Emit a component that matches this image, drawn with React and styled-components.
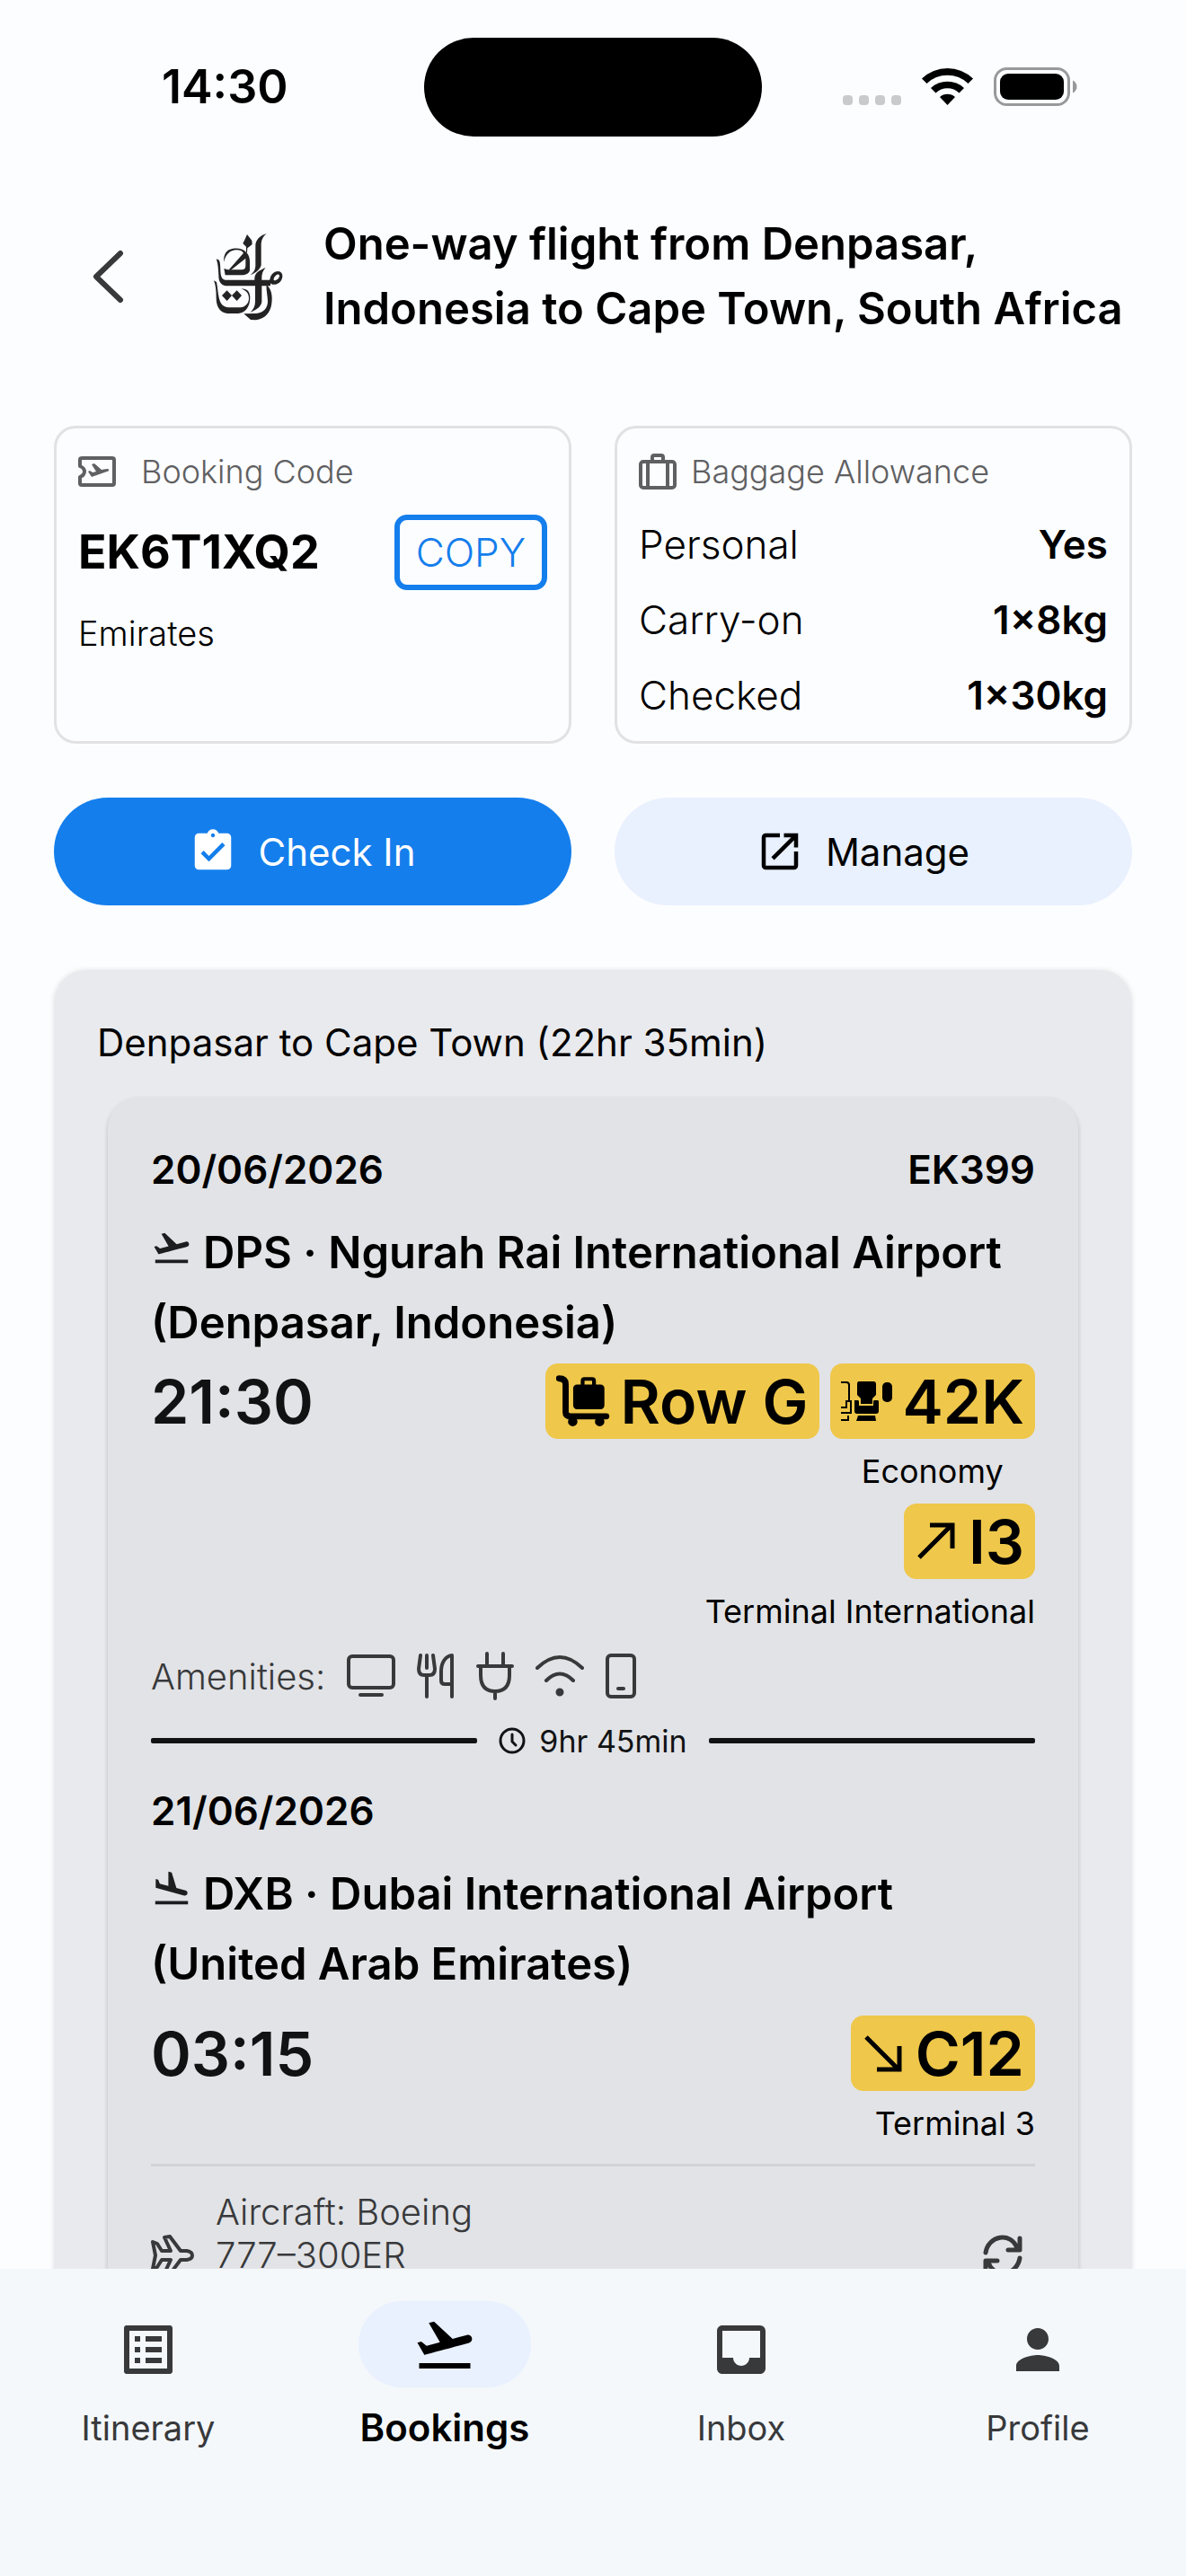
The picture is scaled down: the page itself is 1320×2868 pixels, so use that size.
import React from 'react';
import styled, { createGlobalStyle, css } from 'styled-components';
import {
  MdFlightTakeoff,
  MdFlightLand,
  MdAssignmentTurnedIn,
  MdOutlineOpenInNew,
  MdOutlineListAlt,
  MdInbox,
  MdPerson,
} from 'react-icons/md';

const Global = createGlobalStyle`
  * { box-sizing: border-box; }
  body {
    margin: 0;
    background: #fcfdff;
    color: #000;
    font-family: Inter, "Liberation Sans", sans-serif;
  }
  button { font: inherit; color: inherit; cursor: pointer; }
  h1, h2, h3, p, dl, dd, dt, ul { margin: 0; padding: 0; }
  svg { display: block; flex: none; }
`;

const Screen = styled.div`
  height: 100vh;
  display: flex;
  flex-direction: column;
`;

/* Status bar */
const StatusBar = styled.div`
  display: grid;
  grid-template-columns: 1fr auto 1fr;
  align-items: center;
  padding: 42px 120px 0;
`;
const Clock = styled.time`
  padding-left: 60px;
  font-size: 52px;
  line-height: 64px;
  font-weight: 600;
`;
const Island = styled.div`
  width: 376px;
  height: 110px;
  border-radius: 55px;
  background: #000;
`;
const StatusIcons = styled.div`
  display: flex;
  justify-content: flex-end;
  align-items: center;
`;

/* Header */
const Header = styled.header`
  display: flex;
  align-items: center;
  padding: 84px 60px 94px 84px;
`;
const BackButton = styled.button`
  display: grid;
  place-items: center;
  width: 72px;
  height: 72px;
  padding: 0;
  border: 0;
  background: none;
`;
const LogoBox = styled.div`
  width: 120px;
  margin: 0 24px 0 60px;
  display: flex;
  justify-content: center;
`;
const Title = styled.h1`
  flex: 1;
  font-size: 49px;
  line-height: 72px;
  font-weight: 600;
`;

const Main = styled.main`
  flex: 1;
  min-height: 0;
  overflow-y: auto;
  scrollbar-width: none;
`;
const Columns = styled.div`
  display: grid;
  grid-template-columns: 1fr 1fr;
  gap: 48px;
  padding: 0 60px;
  margin-bottom: 60px;
`;

/* Info cards */
const InfoCard = styled.section`
  min-height: 354px;
  padding: 21px 24px 9px;
  border: 3px solid #e2e2e5;
  border-radius: 24px;
`;
const CardLabel = styled.h2`
  display: flex;
  align-items: center;
  gap: ${(p) => p.$gap};
  height: 54px;
  font-size: 36px;
  font-weight: 300;
  color: #5f6062;
`;
const CodeRow = styled.div`
  display: flex;
  align-items: center;
  justify-content: space-between;
  margin-top: 21px;
`;
const Code = styled.strong`
  font-size: 52px;
  line-height: 72px;
  font-weight: 700;
`;
const CopyButton = styled.button`
  height: 84px;
  padding: 0 18px;
  border: 6px solid #147eec;
  border-radius: 14px;
  background: none;
  && {
    font-size: 44px;
    font-weight: 300;
    color: #147eec;
  }
`;
const Airline = styled.p`
  margin-top: 21px;
  font-size: 38px;
  line-height: 54px;
  font-weight: 300;
`;
const Allowance = styled.dl`
  display: grid;
  margin-top: 12px;
`;
const AllowanceRow = styled.div`
  display: flex;
  justify-content: space-between;
  font-size: 44px;
  line-height: 84px;
  font-weight: 300;
`;
const Amount = styled.dd`
  font-weight: 600;
`;

const ActionButton = styled.button`
  display: flex;
  align-items: center;
  justify-content: center;
  gap: 24px;
  height: 120px;
  padding: 0 24px 0 0;
  border: 0;
  border-radius: 60px;
  background: #e9f0fe;
  && { font-size: 42px; }
  ${(p) => p.$primary && css`&& { background: #147eec; color: #fff; }`}
`;

/* Journey */
const Journey = styled.section`
  margin: 72px 60px 0;
  padding: 48px 60px 60px;
  border-radius: 36px;
  background: #e9eaed;
  box-shadow: 0 0 4px 2px rgba(0, 0, 0, 0.06);
`;
const JourneyTitle = styled.h2`
  margin-left: -12px;
  font-size: 42px;
  line-height: 66px;
  font-weight: 400;
`;
const Leg = styled.article`
  margin-top: 27px;
  padding: 48px;
  border-radius: 36px;
  background: #e2e3e6;
  box-shadow: 0 3px 4px 1px rgba(0, 0, 0, 0.14);
`;
const Row = styled.div`
  display: flex;
  justify-content: space-between;
  align-items: ${(p) => p.$align || 'center'};
  margin-top: ${(p) => p.$top || '0'};
`;
const DateText = styled.span`
  font-size: 44px;
  line-height: 66px;
  font-weight: 600;
`;
const Airport = styled.h3`
  margin-top: 21px;
  font-size: 49px;
  line-height: 78px;
  font-weight: 600;
  svg {
    display: inline-block;
    margin-right: 12px;
    color: #1d1e20;
  }
`;
const Place = styled.span`
  display: block;
`;
const Time = styled.time`
  font-size: 68px;
  line-height: 84px;
  font-weight: 600;
  color: #111214;
`;
const Places = styled.div`
  display: flex;
  flex-direction: column;
  align-items: flex-end;
`;
const Badges = styled.div`
  display: flex;
  gap: 12px;
`;
const BadgeColumn = styled.div`
  display: flex;
  flex-direction: column;
  align-items: center;
`;
const Badge = styled.span`
  display: flex;
  align-items: center;
  gap: 12px;
  height: 84px;
  padding: 0 12px;
  border-radius: 14px;
  background: #efc74a;
  font-size: 68px;
  font-weight: 600;
  white-space: nowrap;
`;
const Caption = styled.span`
  font-size: 36px;
  line-height: 72px;
`;
const Amenities = styled.div`
  display: flex;
  align-items: center;
  height: 72px;
  color: #38393b;
  font-size: 40px;
  font-weight: 300;
`;
const AmenityList = styled.ul`
  display: flex;
  align-items: center;
  gap: 24px;
  margin-left: 24px;
  list-style: none;
`;
const Duration = styled.div`
  display: flex;
  align-items: center;
  gap: 24px;
  height: 72px;
  font-size: 34px;
  color: #111214;
  &::before, &::after {
    content: '';
    flex: 1;
    height: 6px;
    border-radius: 2px;
    background: #111214;
  }
`;
const DurationText = styled.span`
  display: flex;
  align-items: center;
  gap: 15px;
`;
const Aircraft = styled.footer`
  display: flex;
  align-items: center;
  margin-top: 9px;
  padding-top: 27px;
  border-top: 3px solid #d2d3d5;
  color: #38393b;
`;
const AircraftText = styled.p`
  width: 330px;
  margin: 0 auto 0 24px;
  padding-bottom: 48px;
  font-size: 40px;
  line-height: 48px;
  font-weight: 300;
`;
const IconButton = styled.button`
  display: grid;
  place-items: center;
  width: 72px;
  height: 72px;
  padding: 0;
  border: 0;
  background: none;
`;

/* Bottom navigation */
const Nav = styled.nav`
  display: grid;
  grid-template-columns: repeat(4, 1fr);
  padding: 36px 0 132px;
  background: #f4f8fb;
`;
const NavItem = styled.a`
  display: flex;
  flex-direction: column;
  align-items: center;
  gap: 12px;
  font-size: ${(p) => (p.$active ? '42px' : '38px')};
  line-height: 66px;
  font-weight: ${(p) => (p.$active ? 600 : 400)};
  color: ${(p) => (p.$active ? '#000' : '#38393b')};
  text-decoration: none;
`;
const NavPill = styled.span`
  display: grid;
  place-items: center;
  width: 192px;
  height: 96px;
  padding-top: ${(p) => (p.$active ? '0' : '12px')};
  border-radius: 48px;
  background: ${(p) => (p.$active ? '#e9f0fe' : 'transparent')};
`;

const Stroke = ({ w, h, vb, sw = 4, children }) => (
  <svg width={w} height={h} viewBox={vb || `0 0 ${w} ${h}`} fill="none" stroke="currentColor" strokeWidth={sw} strokeLinecap="round" strokeLinejoin="round" aria-hidden="true">
    {children}
  </svg>
);

const SignalStatus = () => (
  <svg width="262" height="44" viewBox="0 0 262 44" aria-hidden="true">
    <g fill="#c9cacc">
      <rect x="0" y="31" width="11" height="11" rx="4" />
      <rect x="18" y="31" width="11" height="11" rx="4" />
      <rect x="36" y="31" width="11" height="11" rx="4" />
      <rect x="54" y="31" width="11" height="11" rx="4" />
    </g>
    <path d="M88 12.500A41 41 0 0 1 145 12.500L139.500 18A33 33 0 0 0 93.500 18Z" />
    <path d="M98 23A27 27 0 0 1 135 23L129.500 28.500A19 19 0 0 0 103.500 28.500Z" />
    <path d="M108 33A13 13 0 0 1 125 33L116.500 42Z" />
    <rect x="169.500" y="1.500" width="82" height="40" rx="13" fill="none" stroke="#98999b" strokeWidth="3" />
    <rect x="175" y="7" width="71" height="29" rx="9" />
    <path d="M256 14.500C262 17 262 26 256 28.500Z" fill="#98999b" />
  </svg>
);

const EmiratesLogo = () => (
  <svg width="78" height="98" viewBox="52 50 234 294" fill="#232323" role="img" aria-label="Emirates">
    <path d="M166 56l16 20 1 13-8 7-8 6-1 14-3 1v-20l-11-11 6-12z" />
    <path d="M231 53c-14 12-18 24-18 40v66c-4 14-16 25-36 33 12-10 17-18 17-33V94c0-20 16-35 37-41z" />
    <path d="M89 148c-3-26 10-42 30-45 32-5 56 12 56 43v30c-2 10-14 16-28 16H93l-4-22c10 4 20 5 34 4h25c9 0 13-5 13-14v-24l-50 40-5-3 48-55c-4-8-14-11-27-10-22 3-35 19-38 40z" />
    <path d="M64 138l9 4c3 8 4 21 4 35 1 20 5 30 16 31h98v-6c2-20 17-26 37-35-9 10-13 20-13 33v8h29v20h-29v54c-2 14-16 26-38 34 11-12 16-21 16-36v-52H104c-25 0-33-13-33-35-1-20-2-37-7-53z" />
    <path d="M243 202c3-13 14-23 27-23 13 1 17 14 12 26-6 14-19 20-31 18-10-2-12-10-8-21zm14 8c9 0 16-7 17-15 0-7-7-7-12-2-6 5-10 15-5 17z" fillRule="evenodd" />
    <path d="M55 210l9 5c3 14 4 31 7 47 5 25 13 36 34 38h38c20-3 29-15 29-32-1-18-11-26-25-30 18-2 29 9 29 30-1 31-16 49-40 52h-36c-28-4-37-25-37-53 0-24-2-43-8-57z" />
    <path d="M99 243l16 17-16 18-17-18zM132 243l16 17-16 18-17-18z" />
    <path d="M231 224c15 13 21 35 17 63-4 31-23 51-52 55l-18-1-23-20 41-1c24-2 38-17 39-39 0-22-6-38-4-57z" />
  </svg>
);

const TicketIcon = () => (
  <Stroke w={42} h={34} sw={4}>
    <path d="M4 2h34a2 2 0 0 1 2 2v26a2 2 0 0 1-2 2H4a2 2 0 0 1-2-2v-7q5-2 5-6t-5-6V4a2 2 0 0 1 2-2z" />
    <path d="M11 17l2-1 3 2 4-1-5-8 3-1 8 7 6-1q3 0 2 2-1 1-2 1L15 23z" fill="currentColor" stroke="none" />
  </Stroke>
);
const LuggageIcon = () => (
  <Stroke w={42} h={40} sw={4}>
    <rect x="2" y="9" width="38" height="29" rx="3" />
    <path d="M10 9v29M32 9v29M15 9V4q0-2 2-2h8q2 0 2 2v5" />
  </Stroke>
);
const CartIcon = () => (
  <svg width="60" height="58" viewBox="0 0 57 55" aria-hidden="true">
    <path d="M3 3.500q7 0 7 6V39q0 4.500 5 4.500h38" fill="none" stroke="#000" strokeWidth="6.500" strokeLinecap="round" />
    <rect x="18" y="10" width="33" height="26" rx="4" />
    <path d="M28 12V6q0-2 2-2h8q2 0 2 2v6" fill="none" stroke="#000" strokeWidth="4" />
    <circle cx="17.500" cy="49" r="5" /><circle cx="46" cy="49" r="5" />
  </svg>
);
const SeatIcon = () => (
  <svg width="57" height="46" viewBox="0 0 57 46" aria-hidden="true">
    <path d="M20 1h16q3 0 3 3v12l-4 4v6H22v-6l-4-4V4q0-3 2-3z" />
    <path d="M15 22h4q1 0 1 2v4h16v-4q0-2 1-2h4q1 0 1 2v10q0 3-3 3H18q-3 0-3-3zM19 39h19l1 6H17z" />
    <rect x="46" y="2" width="11" height="22" rx="5" />
    <path d="M0 2h6q3 0 3 3v18M0 30h6v-7h5v13H0M0 44h8v-5" fill="none" stroke="#000" strokeWidth="2" />
  </svg>
);
const ArrowUp = () => (
  <svg width="48" height="48" viewBox="0 0 48 48" fill="none" stroke="#000" strokeWidth="5" aria-hidden="true"><path d="M5 42L42 5M17 6h25v26" /></svg>
);
const ArrowDown = () => (
  <svg width="48" height="48" viewBox="0 0 48 48" fill="none" stroke="#000" strokeWidth="5" aria-hidden="true"><path d="M5 6L42 43M17 42h25V16" /></svg>
);
const amenities = [
  ['Screen', <Stroke w={54} h={48}><rect x="2" y="2" width="50" height="35" rx="4" /><path d="M15 45h24" /></Stroke>],
  ['Meal', <Stroke w={42} h={50}><path d="M4 2L2 17q0 7 6 7h6q6 0 6-7L18 2M11 2v14M11 24v24M39 48V2c-8 1-12 9-12 18v10q0 4 4 4h8" /></Stroke>],
  ['Power', <Stroke w={42} h={54}><path d="M2 16h38M5 16v10q0 18 16 18t16-18V16M12 16V2M30 16V2M21 44v8" /></Stroke>],
  ['Wi-Fi', <Stroke w={54} h={48}><path d="M2 15q25-24 50 0M12 29q15-15 30 0" /><circle cx="27" cy="42" r="2.500" fill="currentColor" /></Stroke>],
  ['Phone', <Stroke w={34} h={50}><rect x="2" y="2" width="30" height="46" rx="4" /><path d="M14 39h6" /></Stroke>],
];

export default function App() {
  return (
    <Screen>
      <Global />
      <StatusBar>
        <Clock>14:30</Clock>
        <Island />
        <StatusIcons><SignalStatus /></StatusIcons>
      </StatusBar>
      <Header>
        <BackButton aria-label="Back">
          <Stroke w={36} h={60} sw={6}><path d="M32 4L5 30l27 26" stroke="#38393b" /></Stroke>
        </BackButton>
        <LogoBox><EmiratesLogo /></LogoBox>
        <Title>One-way flight from Denpasar, Indonesia to Cape Town, South Africa</Title>
      </Header>
      <Main>
        <Columns>
          <InfoCard>
            <CardLabel $gap="28px"><TicketIcon />Booking Code</CardLabel>
            <CodeRow>
              <Code>EK6T1XQ2</Code>
              <CopyButton>COPY</CopyButton>
            </CodeRow>
            <Airline>Emirates</Airline>
          </InfoCard>
          <InfoCard>
            <CardLabel $gap="16px"><LuggageIcon />Baggage Allowance</CardLabel>
            <Allowance>
              <AllowanceRow><dt>Personal</dt><Amount>Yes</Amount></AllowanceRow>
              <AllowanceRow><dt>Carry-on</dt><Amount>1×8kg</Amount></AllowanceRow>
              <AllowanceRow><dt>Checked</dt><Amount>1×30kg</Amount></AllowanceRow>
            </Allowance>
          </InfoCard>
        </Columns>
        <Columns>
          <ActionButton $primary><MdAssignmentTurnedIn size={54} />Check In</ActionButton>
          <ActionButton><MdOutlineOpenInNew size={54} />Manage</ActionButton>
        </Columns>
        <Journey>
          <JourneyTitle>Denpasar to Cape Town (22hr 35min)</JourneyTitle>
          <Leg>
            <Row><DateText>20/06/2026</DateText><DateText>EK399</DateText></Row>
            <Airport>
              <MdFlightTakeoff size={46} />DPS · Ngurah Rai International Airport{' '}
              <Place>(Denpasar, Indonesia)</Place>
            </Airport>
            <Row $align="flex-start" $top="6px">
              <Time>21:30</Time>
              <Places>
                <Badges>
                  <Badge><CartIcon />Row G</Badge>
                  <BadgeColumn>
                    <Badge><SeatIcon />42K</Badge>
                    <Caption>Economy</Caption>
                  </BadgeColumn>
                </Badges>
                <Badge><ArrowUp />I3</Badge>
                <Caption>Terminal International</Caption>
              </Places>
            </Row>
            <Amenities>
              <span>Amenities:</span>
              <AmenityList>
                {amenities.map(([name, icon]) => <li key={name} title={name}>{icon}</li>)}
              </AmenityList>
            </Amenities>
            <Duration>
              <DurationText>
                <Stroke w={30} h={30} sw={3}><circle cx="15" cy="15" r="13" /><path d="M15 8v8l4 4" /></Stroke>
                9hr 45min
              </DurationText>
            </Duration>
            <Row $top="9px"><DateText>21/06/2026</DateText></Row>
            <Airport>
              <MdFlightLand size={46} />DXB · Dubai International Airport{' '}
              <Place>(United Arab Emirates)</Place>
            </Airport>
            <Row $align="flex-start" $top="18px">
              <Time>03:15</Time>
              <Places>
                <Badge><ArrowDown />C12</Badge>
                <Caption>Terminal 3</Caption>
              </Places>
            </Row>
            <Aircraft>
              <Stroke w={48} h={46} sw={4}>
                <path d="M2 8l5 2 5 8h10L15 3l6-1 12 16h7q6 1 6 5t-6 5h-7L21 44l-6-1 7-15H12l-5 8-5 2 3-15z" />
              </Stroke>
              <AircraftText>Aircraft: Boeing 777–300ER</AircraftText>
              <IconButton aria-label="Refresh">
                <Stroke w={44} h={46} sw={5}><path d="M3 20C6 1 31-4 38 15M41 4v13H28M41 26C38 45 13 50 6 31M3 42V29h13" /></Stroke>
              </IconButton>
            </Aircraft>
          </Leg>
        </Journey>
      </Main>
      <Nav>
        <NavItem href="#itinerary"><NavPill><MdOutlineListAlt size={72} /></NavPill>Itinerary</NavItem>
        <NavItem href="#bookings" $active><NavPill $active><MdFlightTakeoff size={72} /></NavPill>Bookings</NavItem>
        <NavItem href="#inbox"><NavPill><MdInbox size={72} /></NavPill>Inbox</NavItem>
        <NavItem href="#profile"><NavPill><MdPerson size={72} /></NavPill>Profile</NavItem>
      </Nav>
    </Screen>
  );
}
